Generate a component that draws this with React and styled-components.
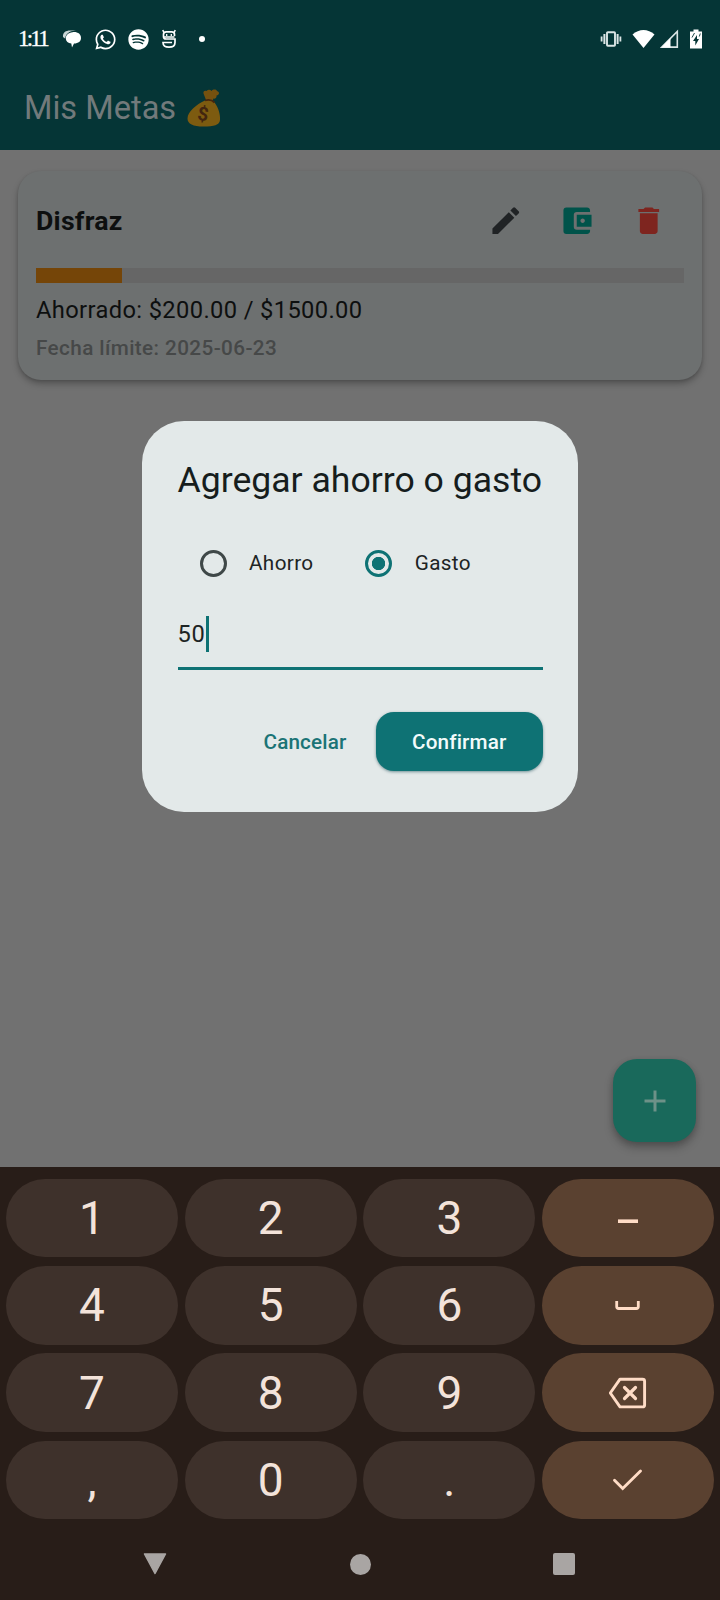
import React, { useState } from "react";
import styled, { createGlobalStyle, css } from "styled-components";
import { FaWhatsapp, FaSpotify } from "react-icons/fa";
import { MdEdit, MdAccountBalanceWallet, MdDelete, MdAdd } from "react-icons/md";

const goal = {
    name: "Disfraz",
    saved: 200,
    target: 1500,
    deadline: "2025-06-23",
};

function StatusBar() {
    return (
        <StatusRow>
            <Clock>1:11</Clock>
            <Notifications>
                <svg width="20" height="20" viewBox="0 0 20 20">
                    <path d="M1 8C0.500 3.500 4 1.500 8 1.500H14C10 1.800 4.500 2.500 3 9.500Z" fill="#c9d6d6" />
                    <path
                        d="M10.500 3.200C15.500 2.600 19 5 19 9C19 12.500 16.500 14.300 12 14.600L10 18.500L9.300 14.600C6 14.300 4 12.500 3.800 9.800C3.600 6 6.500 3.600 10.500 3.200Z"
                        fill="#fff"
                    />
                </svg>
                <FaWhatsapp size={23} />
                <FaSpotify size={21} />
                <svg width="16" height="20" viewBox="0 0 16 20" fill="none" stroke="#fff" strokeWidth="1.700">
                    <path d="M13.500 7V5.500Q13.500 2.800 10.800 2.800H5.200Q2.500 2.800 2.500 5.500V7.500Q2.500 10 5 10H14V13.500C14 16.500 12 18.200 8 18.200S2 16.500 2 13.500H11" />
                    <path d="M2.800 3.500L1.800 1M13.200 3.500L14.200 1" strokeWidth="1.500" />
                    <path d="M5.700 5V7M10.300 5V7M2.500 8H13.500" strokeWidth="1.300" />
                </svg>
                <Dot />
            </Notifications>
            <Indicators>
                <svg width="22" height="18" viewBox="0 0 22 18" fill="none" stroke="#dbe5e5">
                    <rect x="7" y="2.200" width="8" height="13.600" rx="0.800" strokeWidth="1.900" />
                    <path d="M4.400 4V14M17.600 4V14" strokeWidth="2" />
                    <path d="M1.600 6.500V11.500M20.400 6.500V11.500" strokeWidth="1.800" />
                </svg>
                <svg width="23" height="20" viewBox="0 0 23 20">
                    <path d="M0.500 5.500C7 -0.500 16 -0.500 22.500 5.500L11.500 19Z" fill="#fff" />
                </svg>
                <svg width="19" height="20" viewBox="0 0 19 20">
                    <path d="M17.300 2.500V18.100H1.800Z" fill="none" stroke="#dbe5e5" strokeWidth="1.600" />
                    <path d="M1.500 18.500L10.500 9V18.500Z" fill="#fff" />
                </svg>
                <svg width="12" height="20" viewBox="0 0 12 20">
                    <path d="M3.500 0.500H8.500V2.500H12V19.500H0V2.500H3.500Z" fill="#fff" />
                    <path d="M7 6L3 12H5.300V16.500L9 10H7Z" fill="#053536" />
                    <path d="M4.500 4L2 8.500M10.300 4.500L9.300 7.500" stroke="#053536" strokeWidth="0.900" />
                </svg>
            </Indicators>
        </StatusRow>
    );
}

function MoneyBag() {
    return (
        <svg width="34" height="38" viewBox="0 0 34 38">
            <path
                d="M19 11L16.500 4.500C16 2.500 17.500 1 19.500 2C21 0.500 23 0.300 24.500 2C26 0.300 29 0 30 2C33 3 32.500 6 29.500 6.500C30 9 28 10 26.500 9.500L25.500 12Z"
                fill="#75510f"
            />
            <path
                d="M18 11.500C20 10.300 25 10.800 27 13C31.500 18 33.500 26 33 31C32.500 36 27 37.500 16.500 37.500C6 37.500 0.500 35 0.500 29.500C0.500 22.500 10 15 18 11.500Z"
                fill="#7d5b10"
            />
            <path d="M18 11.500C21 10.500 25 11 27.500 13.500" fill="none" stroke="#47260e" strokeWidth="1.800" />
            <text
                x="16"
                y="31.500"
                textAnchor="middle"
                fontFamily="Roboto, sans-serif"
                fontSize="19"
                fontWeight="700"
                fill="#43250f"
                transform="rotate(8 16 25)"
            >
                $
            </text>
        </svg>
    );
}

function GoalCard() {
    return (
        <Card>
            <CardHead>
                <GoalName>{goal.name}</GoalName>
                <CardActions>
                    <IconButton $color="#202325" aria-label="Editar">
                        <MdEdit />
                    </IconButton>
                    <IconButton $color="#00534a" aria-label="Ahorro">
                        <MdAccountBalanceWallet />
                    </IconButton>
                    <IconButton $color="#7e251f" aria-label="Eliminar">
                        <MdDelete />
                    </IconButton>
                </CardActions>
            </CardHead>
            <Track>
                <Fill style={{ width: `${(goal.saved / goal.target) * 100}%` }} />
            </Track>
            <Saved>
                Ahorrado: ${goal.saved.toFixed(2)} / ${goal.target.toFixed(2)}
            </Saved>
            <Deadline>Fecha límite: {goal.deadline}</Deadline>
        </Card>
    );
}

function MovementDialog() {
    const [kind, setKind] = useState("Gasto");
    return (
        <Dialog>
            <DialogTitle>Agregar ahorro o gasto</DialogTitle>
            <Options>
                {["Ahorro", "Gasto"].map((option) => (
                    <Option key={option} onClick={() => setKind(option)}>
                        <Radio $checked={kind === option} />
                        {option}
                    </Option>
                ))}
            </Options>
            <Field>
                50
                <Caret />
            </Field>
            <DialogActions>
                <TextButton>Cancelar</TextButton>
                <FilledButton>Confirmar</FilledButton>
            </DialogActions>
        </Dialog>
    );
}

const MinusIcon = () => (
    <svg width="38" height="38" viewBox="0 0 38 38">
        <path d="M9 22.200H29" strokeWidth="3.600" />
    </svg>
);

const SpaceIcon = () => (
    <svg width="38" height="38" viewBox="0 0 38 38">
        <path d="M7.700 15V20.500Q7.700 22.500 9.700 22.500H27.300Q29.300 22.500 29.300 20.500V15" strokeWidth="2.800" />
    </svg>
);

const BackspaceIcon = () => (
    <svg width="38" height="38" viewBox="0 0 38 38">
        <path
            d="M11 5.200H33.500Q35.600 5.200 35.600 7.200V30.900Q35.600 32.900 33.500 32.900H11L1.300 19Z"
            strokeWidth="2.900"
            strokeLinejoin="round"
        />
        <path d="M15.500 13.500L26.500 24.500M26.500 13.500L15.500 24.500" strokeWidth="3.200" strokeLinecap="round" />
    </svg>
);

const CheckIcon = () => (
    <svg width="38" height="38" viewBox="0 0 38 38">
        <path d="M5.500 19.300L13.700 27.500L31.500 10" strokeWidth="2.900" strokeLinecap="round" />
    </svg>
);

const keys = [
    "1", "2", "3", <MinusIcon />,
    "4", "5", "6", <SpaceIcon />,
    "7", "8", "9", <BackspaceIcon />,
    ",", "0", ".", <CheckIcon />,
];

function Keyboard() {
    return (
        <KeyboardArea>
            <KeyGrid>
                {keys.map((key, i) => (
                    <Key key={i} $action={i % 4 === 3}>
                        {key}
                    </Key>
                ))}
            </KeyGrid>
            <NavBar>
                <svg width="24" height="22" viewBox="0 0 24 22">
                    <path d="M1.500 1H22.500L12 20.500Z" fill="#a9a5a3" stroke="#a9a5a3" strokeWidth="1.500" strokeLinejoin="round" />
                </svg>
                <HomeButton />
                <RecentsButton />
            </NavBar>
        </KeyboardArea>
    );
}

export default function App() {
    return (
        <>
            <GlobalStyle />
            <Screen>
                <Header>
                    <StatusBar />
                    <AppBar>
                        Mis Metas
                        <MoneyBag />
                    </AppBar>
                </Header>
                <Content>
                    <GoalCard />
                    <AddButton aria-label="Agregar meta">
                        <MdAdd />
                    </AddButton>
                </Content>
                <Keyboard />
                <MovementDialog />
            </Screen>
        </>
    );
}

const GlobalStyle = createGlobalStyle`
    * {
        box-sizing: border-box;
    }
    body {
        margin: 0;
        font-family: Roboto, sans-serif;
    }
    svg {
        display: block;
        flex-shrink: 0;
    }
    button {
        border: none;
        padding: 0;
        background: none;
        font-family: inherit;
        cursor: pointer;
    }
`;
const Screen = styled.div`
    position: relative;
    width: 720px;
    height: 1600px;
    display: flex;
    flex-direction: column;
    overflow: hidden;
    background-color: #717171;
`;
const Header = styled.header`
    height: 149.500px;
    background-color: #053536;
`;
const StatusRow = styled.div`
    height: 66px;
    padding: 12px 18px 0 18px;
    display: flex;
    align-items: center;
    color: #fff;
`;
const Clock = styled.span`
    width: 44px;
    font-family: "Liberation Serif", serif;
    font-size: 23px;
    letter-spacing: -2.800px;
    -webkit-text-stroke: 0.300px #fff;
`;
const Notifications = styled.div`
    display: flex;
    align-items: center;
    gap: 11.500px;
`;
const Dot = styled.span`
    width: 6px;
    height: 6px;
    margin-left: 11px;
    border-radius: 50%;
    background-color: #fff;
`;
const Indicators = styled.div`
    display: flex;
    align-items: center;
    gap: 8px;
    margin-left: auto;

    svg:first-child {
        margin-right: 2px;
    }
    svg:nth-child(2) {
        margin-right: -3px;
    }
    svg:last-child {
        margin-left: 3px;
    }
`;
const AppBar = styled.div`
    height: 83px;
    padding-left: 24px;
    display: flex;
    align-items: center;
    gap: 10.500px;
    font-size: 32.600px;
    color: #727a7b;
`;
const Content = styled.main`
    flex: 1;
    padding: 21.500px 18px 24.500px 18px;
    display: flex;
    flex-direction: column;
    justify-content: space-between;
`;
const Card = styled.section`
    height: 208.500px;
    padding: 14.500px 18px 0;
    border-radius: 23px;
    background-color: #6d7070;
    box-shadow: 0 4px 6px rgba(0, 0, 0, 0.250), 0 1px 3px rgba(0, 0, 0, 0.120);
`;
const CardHead = styled.div`
    height: 71px;
    display: flex;
    justify-content: space-between;
    align-items: center;
`;
const GoalName = styled.h2`
    margin: 0;
    font-size: 26.700px;
    font-weight: 700;
    letter-spacing: 0.250px;
    color: #0d0f0f;
`;
const CardActions = styled.div`
    display: flex;
`;
const IconButton = styled.button`
    width: 71.300px;
    height: 71px;
    display: flex;
    align-items: center;
    justify-content: center;
    font-size: 35.500px;
    color: ${(props) => props.$color};
`;
const Track = styled.div`
    height: 15px;
    margin-top: 11.500px;
    background-color: #666666;
`;
const Fill = styled.div`
    height: 100%;
    background-color: #754508;
`;
const Saved = styled.p`
    margin: 9.500px 0 0;
    font-size: 23.700px;
    line-height: 34px;
    letter-spacing: 0.370px;
    color: #0d0f0f;
`;
const Deadline = styled.p`
    margin: 6px 0 0;
    font-size: 20.700px;
    font-weight: 500;
    line-height: 30px;
    letter-spacing: 0.400px;
    color: #464848;
`;
const AddButton = styled.button`
    align-self: flex-end;
    width: 83px;
    height: 83px;
    margin-right: 6px;
    display: flex;
    align-items: center;
    justify-content: center;
    border-radius: 24px;
    font-size: 36px;
    color: #6d9188;
    background-color: #19695b;
    box-shadow: 0 6px 10px rgba(0, 0, 0, 0.220), 0 2px 6px rgba(0, 0, 0, 0.150);
`;
const Dialog = styled.div`
    position: absolute;
    top: 420.500px;
    left: 142px;
    width: 436px;
    height: 391.500px;
    padding: 35px 35.500px 0;
    border-radius: 42px;
    background-color: #e3e9e9;
`;
const DialogTitle = styled.h1`
    margin: 0;
    font-size: 35.600px;
    font-weight: 400;
    line-height: 48px;
    white-space: nowrap;
    color: #161d1d;
`;
const Options = styled.div`
    margin-top: 24px;
    height: 71px;
    padding-left: 22px;
    display: flex;
    align-items: center;
`;
const Option = styled.div`
    width: 165.700px;
    display: flex;
    align-items: center;
    gap: 22.500px;
    font-size: 20.700px;
    line-height: 26px;
    letter-spacing: 0.370px;
    color: #1d2424;
    cursor: pointer;
`;
const Radio = styled.span`
    width: 27px;
    height: 27px;
    flex-shrink: 0;
    border: 3px solid #3f4848;
    border-radius: 50%;

    ${(props) =>
        props.$checked &&
        css`
            border-color: #0e7274;
            background: radial-gradient(circle, #0e7274 6.300px, transparent 7px);
        `}
`;
const Field = styled.div`
    height: 71.500px;
    padding-top: 3px;
    display: flex;
    align-items: center;
    border-bottom: 3px solid #0e7274;
    font-size: 23.700px;
    letter-spacing: 0.740px;
    color: #1d2424;
`;
const Caret = styled.span`
    width: 3px;
    height: 36px;
    background-color: #0e7274;
`;
const DialogActions = styled.div`
    margin-top: 41.500px;
    display: flex;
    justify-content: flex-end;
    align-items: center;
    gap: 11.500px;
`;
const TextButton = styled.button`
    height: 59px;
    padding: 1px 18px 0;
    font-size: 20.700px;
    font-weight: 500;
    letter-spacing: 0.150px;
    color: #1b7476;
`;
const FilledButton = styled(TextButton)`
    width: 166.500px;
    height: 59.500px;
    border-radius: 18px;
    color: #f2fbfb;
    background-color: #0e7274;
    box-shadow: 0 1px 3px rgba(0, 60, 70, 0.500);
`;
const KeyboardArea = styled.footer`
    height: 433.500px;
    background-color: #281d18;
`;
const KeyGrid = styled.div`
    padding: 12px 6px 0;
    display: grid;
    grid-template-columns: repeat(4, 1fr);
    grid-auto-rows: 78.700px;
    gap: 8.700px 6.700px;
`;
const Key = styled.button`
    display: flex;
    align-items: center;
    justify-content: center;
    border-radius: 40px;
    font-size: 46px;
    color: #f3e3da;
    background-color: ${(props) => (props.$action ? "#5a4130" : "#3e312b")};

    svg {
        fill: none;
        stroke: #ffdcc6;
    }
`;
const NavBar = styled.nav`
    height: 90px;
    padding: 0 145px 0 143px;
    display: flex;
    justify-content: space-between;
    align-items: center;
`;
const HomeButton = styled.span`
    width: 21px;
    height: 21px;
    border-radius: 50%;
    background-color: #a9a5a3;
`;
const RecentsButton = styled.span`
    width: 22px;
    height: 22px;
    border-radius: 2px;
    background-color: #a9a5a3;
`;
